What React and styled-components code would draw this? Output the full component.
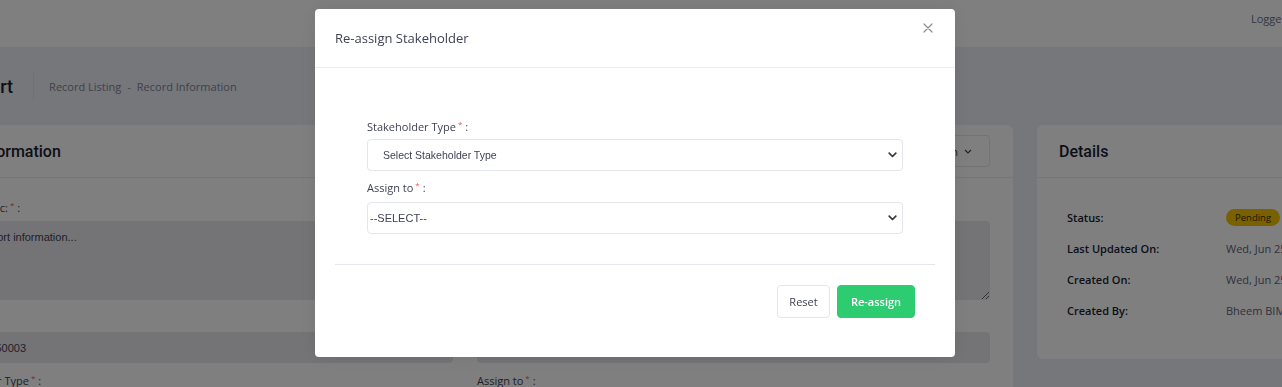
import React from "react";
import styled, { createGlobalStyle } from "styled-components";

const GlobalStyle = createGlobalStyle`
  html, body { margin: 0; padding: 0; }
  body {
    font-family: "Open Sans", "Liberation Sans", sans-serif;
    color: #3f4254;
    background: #eceef5;
    overflow: hidden;
  }
  * { box-sizing: border-box; }
`;

const Viewport = styled.div`
  width: 1282px;
  height: 387px;
  overflow: hidden;
  position: relative;
  background: #eceef5;
`;

/* the page is scrolled horizontally; this offset is the scroll position */
const Scroller = styled.div`
  width: 1500px;
  margin-left: -130px;
`;

const TopBar = styled.header`
  height: 47px;
  background: #ffffff;
  display: flex;
  align-items: flex-start;
  padding: 11px 0 0 1381px;
  font-size: 11px;
  color: #6c7086;
  white-space: nowrap;
`;

const SubHeader = styled.div`
  height: 78px;
  display: flex;
  align-items: center;
  padding-left: 89px;
`;

const PageTitle = styled.h1`
  margin: 0;
  font-family: Roboto, "Open Sans", sans-serif;
  font-size: 18px;
  font-weight: 500;
  color: #181c32;
`;

const VSep = styled.span`
  width: 1px;
  height: 28px;
  background: #e0e2ea;
  margin: 0 15px 0 20px;
`;

const Crumbs = styled.div`
  display: flex;
  gap: 6px;
  font-size: 11px;
  color: #7e8299;
`;

const Main = styled.div`
  display: flex;
  align-items: flex-start;
  gap: 24px;
  padding-left: 25px;
`;

const Card = styled.section`
  background: #ffffff;
  border-radius: 6px;
  width: ${(p) => p.$w}px;
  flex: none;
`;

const CardHeader = styled.div`
  height: 53px;
  display: flex;
  align-items: center;
  justify-content: space-between;
  padding: 0 23px 0 ${(p) => p.$padLeft || 22}px;
  border-bottom: 1px solid #ebedf3;
`;

const CardTitle = styled.h3`
  margin: 0;
  font-family: Roboto, "Open Sans", sans-serif;
  font-size: 16px;
  font-weight: 500;
  color: #181c32;
`;

const ToolButton = styled.button`
  height: 32px;
  width: 85px;
  border: 1px solid #e4e6ef;
  border-radius: 4px;
  background: #fff;
  font-family: inherit;
  font-size: 11px;
  color: #3f4254;
  display: flex;
  align-items: center;
  justify-content: flex-end;
  gap: 6px;
  padding: 0 17px 0 0;
`;

const FormGrid = styled.div`
  display: grid;
  grid-template-columns: 1fr 1fr;
  column-gap: 24px;
  row-gap: 10px;
  padding: 22px 23px 22px 45px;
`;

const Field = styled.div`
  display: flex;
  flex-direction: column;
  gap: ${(p) => p.$gap || 5}px;
`;

const Label = styled.label`
  font-size: 11px;
  line-height: 16px;
  color: #3f4254;
`;

const Req = styled.span`
  color: #f64e60;
  font-size: 8px;
  line-height: 0;
  position: relative;
  top: -4px;
  margin: 0 3px 0 2px;
`;

const SolidArea = styled.textarea`
  height: 79px;
  border: none;
  border-radius: 4px;
  background: #e8e9ef;
  padding: 10px 12px;
  font-family: "Liberation Sans", Arial, sans-serif;
  font-size: 11px;
  color: #3f4254;
  resize: vertical;
  &::placeholder { color: #3f4254; }
`;

const SolidInput = styled.input`
  height: 31px;
  border: none;
  border-radius: 4px;
  background: #e8e9ef;
  padding: 0 12px;
  font-family: "Liberation Sans", Arial, sans-serif;
  font-size: 11px;
  color: #3f4254;
`;

const DetailsBody = styled.div`
  display: grid;
  grid-template-columns: 159px 1fr;
  grid-auto-rows: 31px;
  align-items: center;
  padding: 24px 30px 33px 30px;
  white-space: nowrap;
`;

const DLabel = styled.div`
  font-size: 11px;
  font-weight: 600;
  color: #181c32;
`;

const DValue = styled.div`
  font-size: 11px;
  color: #5e6278;
`;

const Badge = styled.span`
  display: inline-flex;
  align-items: center;
  height: 17px;
  padding: 0 9px;
  border-radius: 9px;
  background: #f2c200;
  color: #3d3000;
  font-size: 9.5px;
`;

/* ---------- modal ---------- */

const Overlay = styled.div`
  position: fixed;
  inset: 0;
  background: rgba(0, 0, 0, 0.5);
  display: flex;
  justify-content: center;
  align-items: flex-start;
  padding: 9px 12px 0 0;
`;

const Modal = styled.div`
  width: 640px;
  background: #ffffff;
  border-radius: 4px;
  box-shadow: 0 0 20px rgba(0, 0, 0, 0.08);
`;

const ModalHeader = styled.div`
  height: 59px;
  display: flex;
  justify-content: space-between;
  align-items: center;
  padding: 0 22px 0 20px;
  border-bottom: 1px solid #ebedf3;
`;

const ModalTitle = styled.h5`
  margin: -1px 0 0;
  font-size: 13px;
  font-weight: 400;
  color: #3f4254;
`;

const CloseButton = styled.button`
  align-self: flex-start;
  margin-top: 14px;
  width: 10px;
  height: 10px;
  padding: 0;
  border: none;
  background: none;
  display: flex;
  cursor: pointer;
`;

const ModalBody = styled.div`
  padding: 51px 52px 30px 52px;
  display: flex;
  flex-direction: column;
  gap: 9px;
`;

const SelectWrap = styled.div`
  position: relative;
  height: 32px;
`;

const Select = styled.select`
  appearance: none;
  -webkit-appearance: none;
  width: 100%;
  height: 32px;
  border: 1px solid #e4e6ef;
  border-radius: 4px;
  background: #fff;
  padding: 0 30px 0 ${(p) => p.$pad}px;
  font-family: "Liberation Sans", Arial, sans-serif;
  font-size: ${(p) => p.$size}px;
  color: #3f4254;
  outline: none;
`;

const Chevron = styled.svg`
  position: absolute;
  right: 6px;
  top: 13px;
  pointer-events: none;
`;

const ModalFooter = styled.div`
  margin: 0 20px;
  border-top: 1px solid #e4e6ef;
  padding: 20px 20px 39px;
  display: flex;
  justify-content: flex-end;
  gap: 7px;
`;

const Button = styled.button`
  height: 33px;
  width: ${(p) => p.$w}px;
  border-radius: 4px;
  font-family: inherit;
  font-size: 11px;
  font-weight: ${(p) => (p.$primary ? 600 : 400)};
  border: 1px solid ${(p) => (p.$primary ? "#2ecc71" : "#e4e6ef")};
  background: ${(p) => (p.$primary ? "#2ecc71" : "#ffffff")};
  color: ${(p) => (p.$primary ? "#ffffff" : "#3f4254")};
  cursor: pointer;
`;

const ChevronIcon = () => (
  <Chevron width="9" height="6" viewBox="0 0 9 6">
    <path d="M1.2 1.2l3.3 3.3 3.3-3.3" fill="none" stroke="#343a40" strokeWidth="1.7" strokeLinecap="round" strokeLinejoin="round" />
  </Chevron>
);

export default function App() {
  return (
    <>
      <GlobalStyle />
      <Viewport>
        <Scroller>
          <TopBar>Logged in as: Bheem BIM Admin</TopBar>
          <SubHeader>
            <PageTitle>Report</PageTitle>
            <VSep />
            <Crumbs>
              <span>Record Listing</span>
              <span>-</span>
              <span>Record Information</span>
            </Crumbs>
          </SubHeader>
          <Main>
            <Card $w={1118}>
              <CardHeader $padLeft={30}>
                <CardTitle>Report Information</CardTitle>
                <ToolButton>
                  Action
                  <svg width="8" height="5" viewBox="0 0 8 5">
                    <path d="M1 1l3 3 3-3" fill="none" stroke="#3f4254" strokeWidth="1.1" />
                  </svg>
                </ToolButton>
              </CardHeader>
              <FormGrid>
                <Field>
                  <Label>Report Topic:<Req>*</Req>:</Label>
                  <SolidArea placeholder="Enter report information..." />
                </Field>
                <Field>
                  <Label>Remarks<Req>*</Req>:</Label>
                  <SolidArea />
                </Field>
                <Field $gap={6}>
                  <Label>Ref No:<Req>*</Req>:</Label>
                  <SolidInput defaultValue="RPT-20250003" />
                </Field>
                <Field $gap={6}>
                  <Label>Date<Req>*</Req>:</Label>
                  <SolidInput />
                </Field>
                <Field>
                  <Label>Stakeholder Type<Req>*</Req>:</Label>
                </Field>
                <Field>
                  <Label>Assign to<Req>*</Req>:</Label>
                </Field>
              </FormGrid>
            </Card>
            <Card $w={400}>
              <CardHeader>
                <CardTitle>Details</CardTitle>
              </CardHeader>
              <DetailsBody>
                <DLabel>Status:</DLabel>
                <DValue><Badge>Pending</Badge></DValue>
                <DLabel>Last Updated On:</DLabel>
                <DValue>Wed, Jun 25, 2025 10:42 AM</DValue>
                <DLabel>Created On:</DLabel>
                <DValue>Wed, Jun 25, 2025 10:42 AM</DValue>
                <DLabel>Created By:</DLabel>
                <DValue>Bheem BIM Admin</DValue>
              </DetailsBody>
            </Card>
          </Main>
        </Scroller>

        <Overlay>
          <Modal>
            <ModalHeader>
              <ModalTitle>Re-assign Stakeholder</ModalTitle>
              <CloseButton aria-label="Close">
                <svg width="10" height="10" viewBox="0 0 10 10">
                  <path d="M1 1l8 8M9 1L1 9" stroke="#8a8d98" strokeWidth="1.2" strokeLinecap="round" />
                </svg>
              </CloseButton>
            </ModalHeader>
            <ModalBody>
              <Field $gap={4}>
                <Label>Stakeholder Type<Req>*</Req>:</Label>
                <SelectWrap>
                  <Select $pad={15} $size={10.5} defaultValue="">
                    <option value="">Select Stakeholder Type</option>
                  </Select>
                  <ChevronIcon />
                </SelectWrap>
              </Field>
              <Field $gap={6}>
                <Label>Assign to<Req>*</Req>:</Label>
                <SelectWrap>
                  <Select $pad={2} $size={11} defaultValue="">
                    <option value="">--SELECT--</option>
                  </Select>
                  <ChevronIcon />
                </SelectWrap>
              </Field>
            </ModalBody>
            <ModalFooter>
              <Button $w={53}>Reset</Button>
              <Button $w={78} $primary>Re-assign</Button>
            </ModalFooter>
          </Modal>
        </Overlay>
      </Viewport>
    </>
  );
}
